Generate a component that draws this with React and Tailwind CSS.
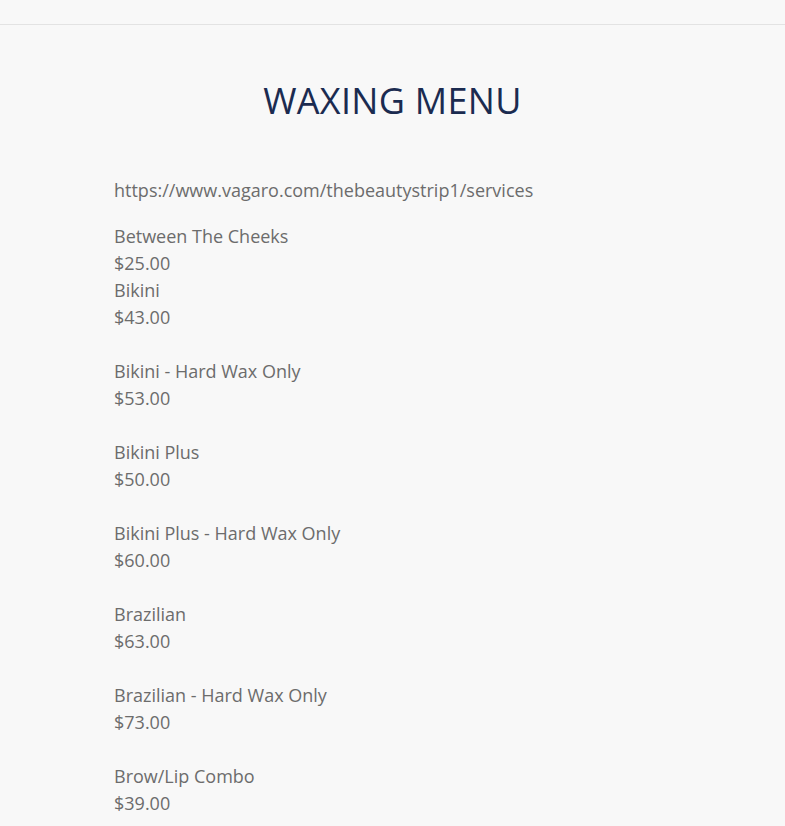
const items = [
  ['Between The Cheeks', '$25.00'],
  ['Bikini', '$43.00'],
  null,
  ['Bikini - Hard Wax Only', '$53.00'],
  null,
  ['Bikini Plus', '$50.00'],
  null,
  ['Bikini Plus - Hard Wax Only', '$60.00'],
  null,
  ['Brazilian', '$63.00'],
  null,
  ['Brazilian - Hard Wax Only', '$73.00'],
  null,
  ['Brow/Lip Combo', '$39.00'],
]

export default function App() {
  return (
    <div className="min-h-screen bg-[#f8f8f8] font-['Open_Sans',sans-serif]">
      <div className="h-[25px] border-b border-[#e3e3e3]" />
      <div className="px-[114px]">
        <h1 className="pt-[56px] text-center text-[36px] leading-[40px] font-medium text-[#1b2b50] tracking-[0.3px]">
          WAXING MENU
        </h1>
        <p className="mt-[56px] text-[18px] leading-[27px] text-[#6c6c6c]">
          https://www.vagaro.com/thebeautystrip1/services
        </p>
        <div className="mt-[19px] text-[18px] leading-[27px] text-[#6c6c6c]">
          {items.map((it, i) =>
            it ? (
              <div key={i}>
                <div>{it[0]}</div>
                <div>{it[1]}</div>
              </div>
            ) : (
              <div key={i} className="h-[27px]" />
            )
          )}
        </div>
      </div>
    </div>
  )
}
